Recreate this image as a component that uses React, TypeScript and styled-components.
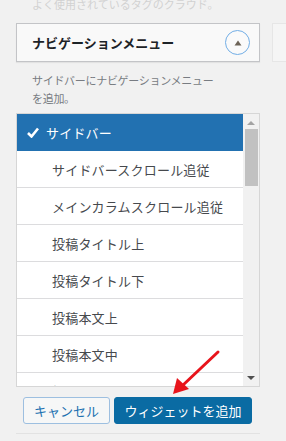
import { createGlobalStyle, styled } from 'styled-components';

const GlobalStyle = createGlobalStyle`
  html, body {
    margin: 0;
    padding: 0;
    background: #f1f1f1;
    font-family: "Noto Sans CJK JP", "Liberation Sans", sans-serif;
    overflow: hidden;
  }
`;

const Page = styled.div`
  position: relative;
  display: flex;
  gap: 12px;
  width: 286px;
  height: 441px;
  padding-left: 16px;
  box-sizing: border-box;
  overflow: hidden;
`;

const Column = styled.div`
  display: flex;
  flex-direction: column;
  width: 244px;
  flex-shrink: 0;
`;

const SideColumn = styled.div`
  flex: 1;
  padding-top: 23px;
`;

const GhostBox = styled.div`
  height: 39px;
  box-sizing: border-box;
  border: 1px solid #e6e6e6;
  border-right: none;
  background: #f5f5f5;
`;

const FadedText = styled.div`
  margin: -3px 0 0 16px;
  height: 14px;
  line-height: 14px;
  font-size: 11px;
  color: #d2d2d2;
  white-space: nowrap;
`;

const Header = styled.div`
  margin-top: 12px;
  height: 39px;
  box-sizing: border-box;
  display: flex;
  align-items: center;
  justify-content: space-between;
  padding: 0 9px 0 15px;
  background: #f9f9f9;
  border: 1px solid #c3c4c7;
  box-shadow: 0 1px 1px rgba(0, 0, 0, 0.06);
`;

const Title = styled.h3`
  margin: 0;
  font-size: 13px;
  font-weight: 700;
  color: #1d2327;
`;

const ToggleButton = styled.button`
  width: 25px;
  height: 25px;
  padding: 0;
  border-radius: 50%;
  border: 1.5px solid #72aee6;
  background: #fafafa;
  display: flex;
  align-items: center;
  justify-content: center;
`;

const Description = styled.p`
  margin: 9px 0 0 0;
  padding-left: 16px;
  font-size: 11px;
  letter-spacing: -0.3px;
  line-height: 18px;
  color: #787c82;
`;

const ListBox = styled.div`
  margin-top: 6px;
  height: 274px;
  box-sizing: border-box;
  display: flex;
  background: #fff;
  border: 1px solid #d6d6d6;
`;

const Items = styled.ul`
  flex: 1;
  margin: 0;
  padding: 0;
  list-style: none;
  overflow: hidden;
`;

const Item = styled.li<{ $selected?: boolean }>`
  height: 37px;
  box-sizing: border-box;
  display: flex;
  align-items: center;
  gap: 7px;
  padding-left: ${(p) => (p.$selected ? '10px' : '35px')};
  font-size: 13px;
  letter-spacing: 0.2px;
  white-space: nowrap;
  color: ${(p) => (p.$selected ? '#fff' : '#46494d')};
  background: ${(p) => (p.$selected ? '#2271b1' : '#fff')};
  border-bottom: 1px solid ${(p) => (p.$selected ? '#2271b1' : '#dcdcde')};
`;

const Scrollbar = styled.div`
  width: 16px;
  display: flex;
  flex-direction: column;
  align-items: center;
  background: #f1f1f1;
`;

const Arrow = styled.div<{ $down?: boolean; $dark?: boolean }>`
  width: 0;
  height: 0;
  margin: ${(p) => (p.$down ? 'auto 0 6px' : '7px 0 4px')};
  border-left: 4px solid transparent;
  border-right: 4px solid transparent;
  ${(p) =>
    p.$down
      ? `border-top: 4px solid ${p.$dark ? '#505050' : '#a3a3a3'};`
      : `border-bottom: 4px solid ${p.$dark ? '#505050' : '#a3a3a3'};`}
`;

const Thumb = styled.div`
  width: 13px;
  height: 57px;
  background: #c1c1c1;
`;

const Actions = styled.div`
  margin-top: 10px;
  padding-left: 7px;
  display: flex;
  gap: 4px;
`;

const Button = styled.button<{ $primary?: boolean }>`
  height: 27px;
  padding: 0;
  box-sizing: border-box;
  border-radius: 3px;
  font-family: inherit;
  font-size: 13px;
  width: ${(p) => (p.$primary ? '138px' : '87px')};
  color: ${(p) => (p.$primary ? '#fff' : '#2271b1')};
  background: ${(p) => (p.$primary ? '#0a6ba3' : '#f6f7f7')};
  border: 1px solid ${(p) => (p.$primary ? '#0a6ba3' : '#9dbfe0')};
`;

const Divider = styled.div`
  margin-top: 9px;
  border-top: 1px solid #e2e2e2;
`;

const Annotation = styled.svg`
  position: absolute;
  left: 168px;
  top: 346px;
`;

const items = [
  'サイドバースクロール追従',
  'メインカラムスクロール追従',
  '投稿タイトル上',
  '投稿タイトル下',
  '投稿本文上',
  '投稿本文中',
  '投稿本文下',
];

function App() {
  return (
    <>
      <GlobalStyle />
      <Page>
        <Column>
          <FadedText>よく使用されているタグのクラウド。</FadedText>
          <Header>
            <Title>ナビゲーションメニュー</Title>
            <ToggleButton type="button" aria-label="閉じる">
              <svg width="8" height="6" viewBox="0 0 8 6">
                <path d="M4 0.5 L7.5 5.5 L0.5 5.5 Z" fill="#6d6458" />
              </svg>
            </ToggleButton>
          </Header>
          <Description>
            サイドバーにナビゲーションメニュー
            <br />
            を追加。
          </Description>
          <ListBox>
            <Items>
              <Item $selected>
                <svg width="12" height="11" viewBox="0 0 12 11">
                  <path d="M1 6 L4.5 9.5 L11 1.5" fill="none" stroke="#fff" strokeWidth="2.6" />
                </svg>
                サイドバー
              </Item>
              {items.map((label) => (
                <Item key={label}>{label}</Item>
              ))}
            </Items>
            <Scrollbar>
              <Arrow />
              <Thumb />
              <Arrow $down $dark />
            </Scrollbar>
          </ListBox>
          <Actions>
            <Button type="button">キャンセル</Button>
            <Button type="button" $primary>
              ウィジェットを追加
            </Button>
          </Actions>
          <Divider />
        </Column>
        <SideColumn>
          <GhostBox />
        </SideColumn>
        <Annotation width="56" height="52" viewBox="0 0 56 52">
          <line x1="50" y1="6" x2="14" y2="40" stroke="#e8141b" strokeWidth="3" strokeLinecap="round" />
          <path d="M5 48 L9 32 L21 43 Z" fill="#e8141b" />
        </Annotation>
      </Page>
    </>
  );
}

export default App;
